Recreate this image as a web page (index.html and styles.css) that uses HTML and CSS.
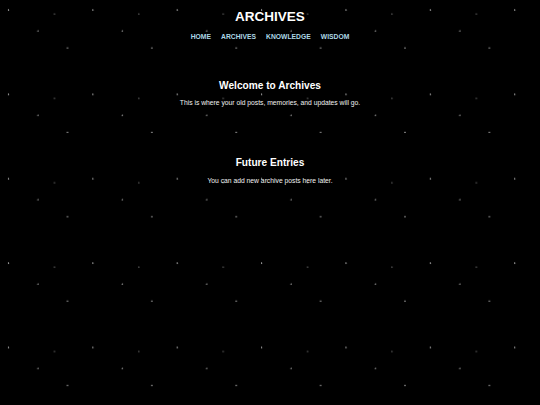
FILE: index.html
```html
<!DOCTYPE html>
<html lang="en">
<head>
<meta charset="utf-8">
<title>Archives</title>
<link rel="stylesheet" href="styles.css">
</head>
<body>
<header class="site-header">
  <h1 class="site-title">ARCHIVES</h1>
  <nav class="site-nav">
    <a href="#" class="nav-link">HOME</a>
    <a href="#" class="nav-link">ARCHIVES</a>
    <a href="#" class="nav-link">KNOWLEDGE</a>
    <a href="#" class="nav-link">WISDOM</a>
  </nav>
</header>
<main class="content">
  <section class="entry">
    <h2 class="entry-title">Welcome to Archives</h2>
    <p class="entry-text">This is where your old posts, memories, and updates will go.</p>
  </section>
  <section class="entry">
    <h2 class="entry-title">Future Entries</h2>
    <p class="entry-text">You can add new archive posts here later.</p>
  </section>
</main>
</body>
</html>
```
FILE: styles.css
```css
html, body {
  margin: 0;
  padding: 0;
}
body {
  min-height: 405px;
  background-color: #000;
  background-image:
    radial-gradient(circle at 8.5px 10px, #9a9a9a 0.45px, rgba(0,0,0,0) 1.1px),
    radial-gradient(circle at 54.5px 14px, #555 0.4px, rgba(0,0,0,0) 1px),
    radial-gradient(circle at 38px 31px, #808080 0.45px, rgba(0,0,0,0) 1.1px),
    radial-gradient(circle at 67.5px 48px, #808080 0.45px, rgba(0,0,0,0) 1.1px);
  background-size: 84.375px 84.375px;
  color: #fff;
  font-family: "Liberation Sans", Arial, sans-serif;
  text-align: center;
}
.site-header {
  padding-top: 8.6px;
  display: flex;
  flex-direction: column;
  align-items: center;
}
.site-title {
  margin: 0;
  font-size: 13.5px;
  line-height: 16px;
  font-weight: bold;
}
.site-nav {
  margin-top: 8.9px;
  display: flex;
  justify-content: center;
  gap: 10.1px;
}
.nav-link {
  color: #add8e6;
  text-decoration: none;
  font-weight: bold;
  font-size: 6.75px;
  line-height: 8px;
}
.content {
  padding-top: 38.4px;
  display: flex;
  flex-direction: column;
  gap: 50px;
}
.entry-title {
  margin: 0;
  font-size: 10.13px;
  line-height: 12px;
  font-weight: bold;
}
.entry-text {
  margin: 7.4px 0 0;
  color: #f2f2f2;
  font-size: 6.75px;
  line-height: 8px;
}
```
